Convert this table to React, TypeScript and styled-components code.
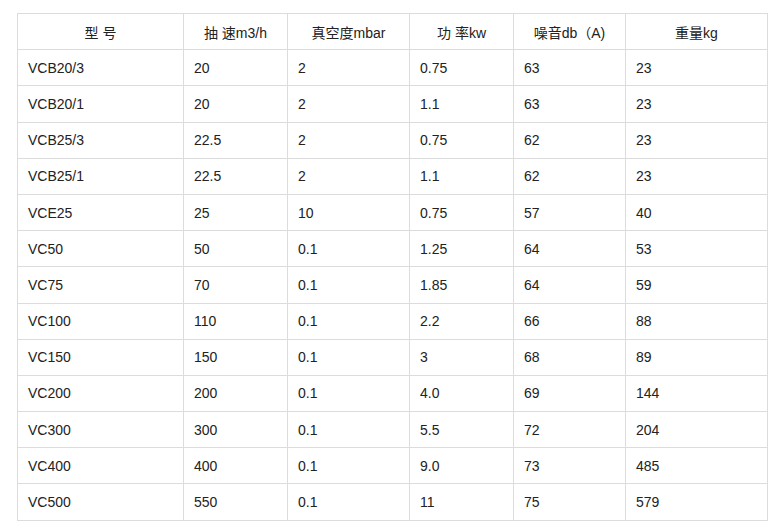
import React from "react";
import styled, { createGlobalStyle } from "styled-components";

const GlobalStyle = createGlobalStyle`
  html, body {
    margin: 0;
    padding: 0;
    background: #ffffff;
  }
  body {
    font-family: "Liberation Sans", Arial, "Noto Sans CJK SC", sans-serif;
  }
`;

const Page = styled.div`
  padding: 13px 0 0 17px;
`;

const Table = styled.table`
  border-collapse: collapse;
  table-layout: fixed;
  width: 751px;
  font-family: "Liberation Sans", Arial, "Noto Sans CJK SC", sans-serif;
  font-size: 14px;
  color: #222;
`;

const Row = styled.tr`
  height: 36.2px;
`;

const HeadCell = styled.th`
  border: 1px solid #dcdcdc;
  font-weight: normal;
  text-align: center;
  padding: 0 8px;
  white-space: nowrap;
`;

const Cell = styled.td`
  border: 1px solid #dcdcdc;
  text-align: left;
  padding: 0 10px;
  white-space: nowrap;
`;

const widths = [166, 104, 122, 104, 112, 142];

const headers = ["型 号", "抽 速m3/h", "真空度mbar", "功 率kw", "噪音db（A)", "重量kg"];

const rows: string[][] = [
  ["VCB20/3", "20", "2", "0.75", "63", "23"],
  ["VCB20/1", "20", "2", "1.1", "63", "23"],
  ["VCB25/3", "22.5", "2", "0.75", "62", "23"],
  ["VCB25/1", "22.5", "2", "1.1", "62", "23"],
  ["VCE25", "25", "10", "0.75", "57", "40"],
  ["VC50", "50", "0.1", "1.25", "64", "53"],
  ["VC75", "70", "0.1", "1.85", "64", "59"],
  ["VC100", "110", "0.1", "2.2", "66", "88"],
  ["VC150", "150", "0.1", "3", "68", "89"],
  ["VC200", "200", "0.1", "4.0", "69", "144"],
  ["VC300", "300", "0.1", "5.5", "72", "204"],
  ["VC400", "400", "0.1", "9.0", "73", "485"],
  ["VC500", "550", "0.1", "11", "75", "579"],
];

export default function App() {
  return (
    <>
      <GlobalStyle />
      <Page>
        <Table>
          <colgroup>
            {widths.map((w, i) => (
              <col key={i} style={{ width: w }} />
            ))}
          </colgroup>
          <thead>
            <Row>
              {headers.map((h) => (
                <HeadCell key={h}>{h}</HeadCell>
              ))}
            </Row>
          </thead>
          <tbody>
            {rows.map((r) => (
              <Row key={r[0]}>
                {r.map((c, i) => (
                  <Cell key={i}>{c}</Cell>
                ))}
              </Row>
            ))}
          </tbody>
        </Table>
      </Page>
    </>
  );
}
